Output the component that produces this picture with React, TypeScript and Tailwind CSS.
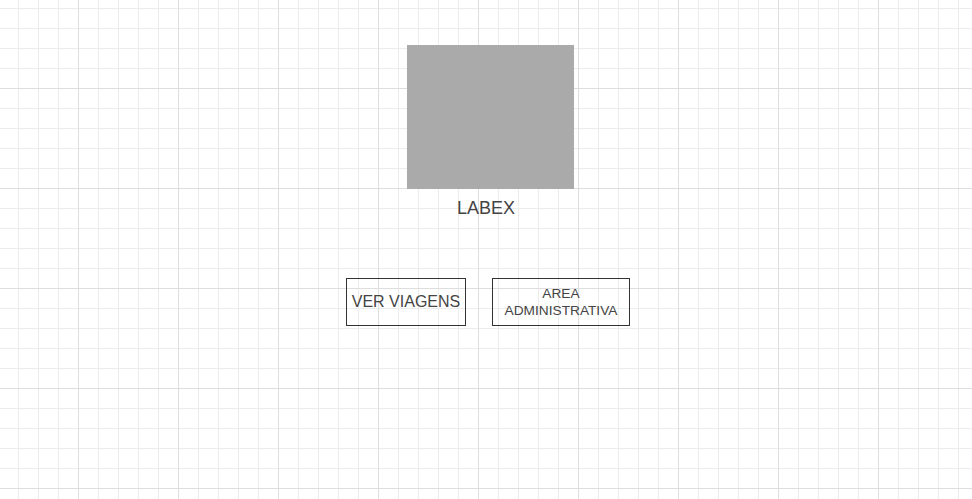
export default function App() {
  return (
    <div className="min-h-screen w-full bg-white bg-[linear-gradient(to_right,#dedede_1px,transparent_1px),linear-gradient(to_bottom,#dedede_1px,transparent_1px),linear-gradient(to_right,#ececec_1px,transparent_1px),linear-gradient(to_bottom,#ececec_1px,transparent_1px)] bg-size-[100px_100px,100px_100px,20px_20px,20px_20px] bg-position-[78px_0,0_88px,18px_0,0_8px] font-['Liberation_Sans',Arial,sans-serif] text-[#444444]">
      <div className="flex flex-col items-center pt-[45px]">
        {/* logo placeholder */}
        <div className="ml-[9px] h-[144px] w-[167px] bg-[#aaaaaa]" />
        <div className="mt-[10px] text-[18px] leading-[18px]">LABEX</div>

        <div className="ml-[4px] mt-[61px] flex gap-[26px]">
          <button
            type="button"
            className="flex h-[48px] w-[120px] items-center justify-center border border-[#333333] text-[16px] leading-none"
          >
            VER VIAGENS
          </button>
          <button
            type="button"
            className="flex h-[48px] w-[138px] items-center justify-center border border-[#333333] text-center text-[13.7px] leading-[17px]"
          >
            AREA
            <br />
            ADMINISTRATIVA
          </button>
        </div>
      </div>
    </div>
  )
}
